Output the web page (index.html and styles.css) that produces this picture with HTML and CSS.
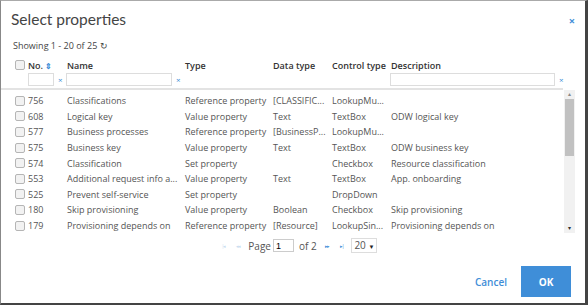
FILE: index.html
```html
<!DOCTYPE html>
<html lang="en">
<head>
  <meta charset="UTF-8">
  <title>Select properties</title>
  <link rel="stylesheet" href="styles.css">
</head>
<body>
  <div class="dialog">
    <div class="dialog-head">
      <h1>Select properties</h1>
      <span class="close">&#215;</span>
    </div>
    <div class="showing">Showing 1 - 20 of 25 <span class="refresh">&#8635;</span></div>

    <div class="grid head-row">
      <span class="cb"></span>
      <span>No.<span class="sort">&#8661;</span></span>
      <span>Name</span>
      <span>Type</span>
      <span>Data type</span>
      <span>Control type</span>
      <span>Description</span>
    </div>
    <div class="grid filter-row">
      <span></span>
      <span class="filter"><input class="f-no" type="text"><i class="clr">&#215;</i></span>
      <span class="filter"><input class="f-name" type="text"><i class="clr">&#215;</i></span>
      <span></span>
      <span></span>
      <span></span>
      <span class="filter"><input class="f-desc" type="text"><i class="clr">&#215;</i></span>
    </div>

    <div class="body">
      <div class="rows">
        <div class="grid row"><span class="cb"></span><span>756</span><span>Classifications</span><span>Reference property</span><span>[CLASSIFIC...</span><span>LookupMu...</span><span></span></div>
        <div class="grid row"><span class="cb"></span><span>608</span><span>Logical key</span><span>Value property</span><span>Text</span><span>TextBox</span><span>ODW logical key</span></div>
        <div class="grid row"><span class="cb"></span><span>577</span><span>Business processes</span><span>Reference property</span><span>[BusinessP...</span><span>LookupMu...</span><span></span></div>
        <div class="grid row"><span class="cb"></span><span>575</span><span>Business key</span><span>Value property</span><span>Text</span><span>TextBox</span><span>ODW business key</span></div>
        <div class="grid row"><span class="cb"></span><span>574</span><span>Classification</span><span>Set property</span><span></span><span>Checkbox</span><span>Resource classification</span></div>
        <div class="grid row"><span class="cb"></span><span>553</span><span>Additional request info a...</span><span>Value property</span><span>Text</span><span>TextBox</span><span>App. onboarding</span></div>
        <div class="grid row"><span class="cb"></span><span>525</span><span>Prevent self-service</span><span>Set property</span><span></span><span>DropDown</span><span></span></div>
        <div class="grid row"><span class="cb"></span><span>180</span><span>Skip provisioning</span><span>Value property</span><span>Boolean</span><span>Checkbox</span><span>Skip provisioning</span></div>
        <div class="grid row"><span class="cb"></span><span>179</span><span>Provisioning depends on</span><span>Reference property</span><span>[Resource]</span><span>LookupSin...</span><span>Provisioning depends on</span></div>
      </div>
      <div class="scrollbar">
        <span class="arrow">&#9652;</span>
        <span class="thumb"></span>
        <span class="arrow down">&#9662;</span>
      </div>
    </div>

    <div class="pager">
      <span class="nav">|&#9666;</span>
      <span class="nav">&#9666;&#9666;</span>
      <span>Page</span>
      <input class="page-input" type="text" value="1">
      <span>of 2</span>
      <span class="nav on">&#9656;&#9656;</span>
      <span class="nav on">&#9656;|</span>
      <span class="size">20 <b>&#9660;</b></span>
    </div>

    <div class="footer">
      <a class="cancel" href="#">Cancel</a>
      <button class="ok">OK</button>
    </div>
  </div>
</body>
</html>
```

FILE: styles.css
```css
body {
  margin: 0;
  background: white;
  font-family: "Open Sans", sans-serif;
  color: #555;
}
.dialog {
  width: 588px;
  height: 305px;
  box-sizing: border-box;
  border-left: 1px solid #888;
  border-top: 1px solid #aaa;
  border-right: 3px solid #444;
  border-bottom: 2px solid #444;
  display: flex;
  flex-direction: column;
}
.dialog-head {
  display: flex;
  justify-content: space-between;
  align-items: center;
  padding: 5px 10px 0 10px;
  height: 26px;
}
.dialog-head h1 {
  margin: 0;
  font-family: Lato, sans-serif;
  font-weight: 400;
  font-size: 15.5px;
  color: #444;
}
.close {
  color: #3f8ed8;
  font-size: 11px;
  font-weight: bold;
  margin-top: 2px;
}
.showing {
  font-size: 9px;
  color: #444;
  padding: 7px 0 0 12px;
  height: 13px;
}
.refresh {
  font-size: 9px;
}
.grid {
  display: grid;
  grid-template-columns: 15px 39px 118px 88px 59px 59px 1fr;
  padding-left: 12px;
  font-size: 9px;
  white-space: nowrap;
}
.head-row {
  margin-top: 6px;
  font-weight: 600;
  color: #333;
  height: 14px;
  align-items: center;
  margin-right: 22px;
}
.sort {
  color: #3f8ed8;
  font-size: 8px;
  margin-left: 2px;
}
.cb {
  width: 8px;
  height: 8px;
  margin-left: 2px;
  border: 1px solid #b5b5b5;
  border-radius: 2px;
  background: #f2f2f2;
  align-self: center;
}
.filter-row {
  height: 15px;
  margin-right: 22px;
  border-bottom: 2px solid #e3e3e3;
  padding-bottom: 1px;
}
.filter {
  display: flex;
  align-items: center;
}
.filter input {
  height: 13px;
  box-sizing: border-box;
  border: 1px solid #ddd;
  padding: 0 2px;
  font-size: 9px;
}
.f-no {
  width: 26px;
}
.f-name {
  width: 106px;
  margin-left: -1px;
}
.f-desc {
  width: 165px;
  margin-left: -1px;
}
.clr {
  font-style: normal;
  color: #3f8ed8;
  font-size: 8px;
  margin-left: 4px;
}
.body {
  display: flex;
  height: 143px;
  margin-right: 10px;
}
.rows {
  flex: 1;
  padding-top: 3px;
  overflow: hidden;
}
.row {
  height: 15.6px;
  align-items: center;
  color: #555;
}
.scrollbar {
  width: 11px;
  background: #f1f1f1;
  display: flex;
  flex-direction: column;
  align-items: center;
}
.arrow {
  font-size: 6px;
  color: #888;
  height: 9px;
  line-height: 9px;
}
.arrow.down {
  margin-top: auto;
  color: #333;
}
.thumb {
  width: 9px;
  height: 57px;
  background: #c1c1c1;
}
.pager {
  display: flex;
  justify-content: center;
  align-items: center;
  gap: 5px;
  font-size: 10px;
  color: #555;
  height: 25px;
  padding-left: 10px;
}
.nav {
  font-size: 5px;
  letter-spacing: -1px;
  color: #c9dcef;
  margin: 0 3px;
}
.nav.on {
  color: #3f8ed8;
}
.page-input {
  width: 21px;
  height: 13px;
  box-sizing: border-box;
  border: 1px solid #ccc;
  font-size: 9px;
  padding: 0 2px;
  margin-left: -3px;
}
.size {
  border: 1px solid #ddd;
  padding: 0 2px;
  height: 13px;
  line-height: 13px;
}
.size b {
  font-size: 6px;
  color: #222;
}
.footer {
  display: flex;
  justify-content: flex-end;
  align-items: center;
  gap: 14px;
  padding: 8px 14px 0 0;
}
.cancel {
  color: #3f8ed8;
  font-size: 10px;
  font-weight: 600;
  text-decoration: none;
}
.ok {
  width: 50px;
  height: 31px;
  border: none;
  background: #3f8ed8;
  color: white;
  font-family: "Open Sans", sans-serif;
  font-weight: 700;
  font-size: 10px;
}
```
